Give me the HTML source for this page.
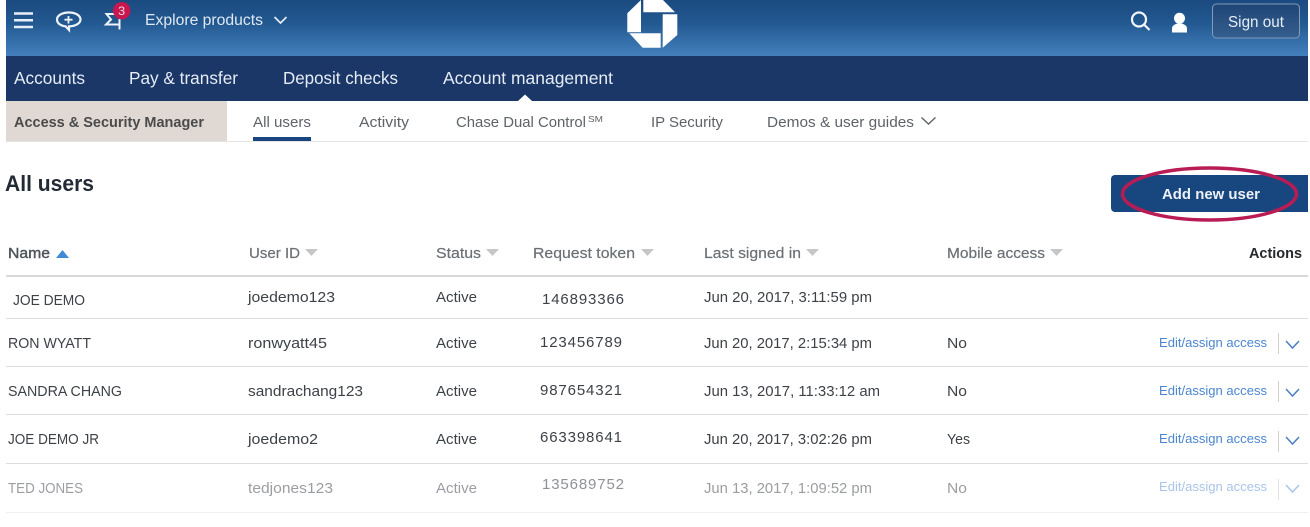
<!DOCTYPE html>
<html><head><meta charset="utf-8"><style>
html,body{margin:0;padding:0;background:#fff;width:1310px;height:527px;overflow:hidden}
svg{display:block;filter:blur(.35px)}
text{font-family:"Liberation Sans",sans-serif;font-size:15.5px;fill:#4a4f55}
.nav{font-size:17.5px;fill:#e6ecf4}
.sub{font-size:15px;fill:#5e6368}
.h{font-size:15px;fill:#6b7075;font-weight:normal;stroke:#6b7075;stroke-width:.2px}
.d{fill:#3d4248;font-size:15px}
.f{fill:#9a9da1;font-size:15px}
.e{fill:#4a85d0;font-size:13px}
.t{fill:#3d4248;font-size:15px}
</style></head><body>
<svg width="1310" height="527" viewBox="0 0 1310 527" xmlns="http://www.w3.org/2000/svg">
<defs><linearGradient id="g" x1="0" y1="0" x2="0" y2="1"><stop offset="0" stop-color="#1b4a80"/><stop offset=".4" stop-color="#225890"/><stop offset="1" stop-color="#4480bd"/></linearGradient>
<linearGradient id="b" x1="0" y1="0" x2="0" y2="1"><stop offset="0" stop-color="#1f4575"/><stop offset="1" stop-color="#355f90"/></linearGradient></defs>
<rect x="6" y="0" width="1302" height="56" fill="url(#g)"/>
<rect x="6" y="56" width="1302" height="45" fill="#1a3768"/>
<rect x="6" y="101" width="221" height="40" fill="#e0d9d3"/>
<rect x="6" y="141" width="1302" height="1" fill="#e4e4e4"/>
<!-- top icons -->
<path d="M14 13.500H33M14 20.300H33M14 27H33" stroke="#e8eef6" stroke-width="2.500" fill="none"/>
<path d="M69 12.500c-7 0-12 3-12 7 0 3.700 3.700 6.400 8.500 6.800l3.500 3.700v-3.600c6.500-.2 11.500-3 11.500-6.900 0-4-5-7-11.500-7z" fill="none" stroke="#eef3f9" stroke-width="2.200"/>
<path d="M64.500 19.700H72.500M68.500 16V23.500" stroke="#eef3f9" stroke-width="1.800"/>
<path d="M119 14H106.500L111 19.500L106 24.500H119.500M119.500 19V29.500" fill="none" stroke="#eef3f9" stroke-width="2"/>
<circle cx="121.700" cy="10.700" r="8.700" fill="#c8174f"/>
<text x="118.200" y="15.200" style="font-size:12px;fill:#f5dbe4" textLength="7" lengthAdjust="spacingAndGlyphs">3</text>
<text x="145" y="25" style="font-size:15.500px;fill:#dfe8f2" textLength="118" lengthAdjust="spacingAndGlyphs">Explore products</text>
<path d="M274.500 17L280.500 23L286.500 17" fill="none" stroke="#e4ecf5" stroke-width="1.700"/>
<!-- logo -->
<g fill="#fff">
<path d="M643.300 0H663L675 12.300H643.300Z"/>
<path d="M627.300 13.300L641 0V32.300H627.300Z"/>
<path d="M662.700 14.300H677.300V35L662.700 47.700Z"/>
<path d="M629.300 33.300H660.700V47.700H642.700Z"/>
</g>
<!-- right icons -->
<circle cx="1139" cy="19.500" r="7" fill="none" stroke="#f2f6fa" stroke-width="2.200"/>
<path d="M1144 24.500L1149.500 30" stroke="#f2f6fa" stroke-width="2.200"/>
<circle cx="1179.500" cy="18.300" r="5.500" fill="#fff"/>
<path d="M1172 32.500V28.500C1172 25 1176 23.500 1179.500 23.500 1183 23.500 1187 25 1187 28.500V32.500Z" fill="#fff"/>
<rect x="1212.500" y="4" width="87" height="34" rx="4" fill="url(#b)" stroke="#7f9cbc" stroke-width="1"/>
<text x="1228" y="27" style="font-size:16px;fill:#e6edf5" textLength="56" lengthAdjust="spacingAndGlyphs">Sign out</text>
<!-- nav -->
<text class="nav" x="14" y="84" textLength="71" lengthAdjust="spacingAndGlyphs">Accounts</text>
<text class="nav" x="129" y="84" textLength="109" lengthAdjust="spacingAndGlyphs">Pay &amp; transfer</text>
<text class="nav" x="283" y="84" textLength="115" lengthAdjust="spacingAndGlyphs">Deposit checks</text>
<text class="nav" x="443" y="84" textLength="170" lengthAdjust="spacingAndGlyphs">Account management</text>
<path d="M518 101L525 94.500L532 101Z" fill="#fff"/>
<!-- subnav -->
<text x="14" y="127" style="font-size:15px;font-weight:bold;fill:#4b4b4c" textLength="190" lengthAdjust="spacingAndGlyphs">Access &amp; Security Manager</text>
<text class="sub" x="253" y="127" textLength="58" lengthAdjust="spacingAndGlyphs">All users</text>
<rect x="253" y="137" width="58" height="4" fill="#1a4680"/>
<text class="sub" x="359" y="127" textLength="50" lengthAdjust="spacingAndGlyphs">Activity</text>
<text class="sub" x="456" y="127" textLength="130" lengthAdjust="spacingAndGlyphs">Chase Dual Control</text>
<text x="588" y="122" style="font-size:8.500px;fill:#5e6368" textLength="15" lengthAdjust="spacingAndGlyphs">SM</text>
<text class="sub" x="651" y="127" textLength="72" lengthAdjust="spacingAndGlyphs">IP Security</text>
<text class="sub" x="767" y="127" textLength="147" lengthAdjust="spacingAndGlyphs">Demos &amp; user guides</text>
<path d="M921.500 117.500L928.500 124L935.500 117.500" fill="none" stroke="#5e6368" stroke-width="1.400"/>
<!-- title -->
<text x="5" y="191" style="font-size:22px;font-weight:bold;fill:#222a35" textLength="89" lengthAdjust="spacingAndGlyphs">All users</text>
<!-- add button -->
<path d="M1115 175H1308V212H1115A4 4 0 0 1 1111 208V179A4 4 0 0 1 1115 175Z" fill="#18477f"/>
<ellipse cx="1209.500" cy="194" rx="87" ry="26" fill="none" stroke="#b91c54" stroke-width="3.500"/>
<text x="1162" y="199" style="font-size:14.500px;font-weight:bold;fill:#eef2f7" textLength="98" lengthAdjust="spacingAndGlyphs">Add new user</text>
<!-- headers -->
<text x="8" y="258" style="font-size:15px;fill:#4f545a;stroke:#4f545a;stroke-width:.4px" textLength="42" lengthAdjust="spacingAndGlyphs">Name</text>
<path d="M56 258L62.500 250L69 258Z" fill="#3f8bd6"/>
<text class="h" x="249" y="258" textLength="51" lengthAdjust="spacingAndGlyphs">User ID</text>
<path d="M305 249H318L311.500 256Z" fill="#c4c6c8"/>
<text class="h" x="436" y="258" textLength="45" lengthAdjust="spacingAndGlyphs">Status</text>
<path d="M486 249H499L492.500 256Z" fill="#c4c6c8"/>
<text class="h" x="533" y="258" textLength="102" lengthAdjust="spacingAndGlyphs">Request token</text>
<path d="M641 249H654L647.500 256Z" fill="#c4c6c8"/>
<text class="h" x="704" y="258" textLength="97" lengthAdjust="spacingAndGlyphs">Last signed in</text>
<path d="M806 249H819L812.500 256Z" fill="#c4c6c8"/>
<text class="h" x="947" y="258" textLength="98" lengthAdjust="spacingAndGlyphs">Mobile access</text>
<path d="M1050 249H1063L1056.500 256Z" fill="#c4c6c8"/>
<text x="1249" y="258" style="font-size:15px;font-weight:bold;fill:#25282c" textLength="53" lengthAdjust="spacingAndGlyphs">Actions</text>
<!-- lines -->
<rect x="6" y="275" width="1302" height="2" fill="#d8d8d8"/>
<rect x="6" y="318" width="1302" height="1" fill="#dcdcdc"/>
<rect x="6" y="366" width="1302" height="1" fill="#dcdcdc"/>
<rect x="6" y="414" width="1302" height="1" fill="#dcdcdc"/>
<rect x="6" y="463" width="1302" height="1" fill="#dcdcdc"/>
<rect x="6" y="512" width="1302" height="1" fill="#efefef"/>
<!-- row 1 -->
<text class="d" x="13" y="305" textLength="72" lengthAdjust="spacingAndGlyphs">JOE DEMO</text>
<text class="d" x="248" y="302" textLength="87" lengthAdjust="spacingAndGlyphs">joedemo123</text>
<text class="d" x="436" y="302" textLength="41" lengthAdjust="spacingAndGlyphs">Active</text>
<text class="t" x="542" y="304" textLength="82" lengthAdjust="spacing">146893366</text>
<text class="d" x="704" y="302" textLength="168" lengthAdjust="spacingAndGlyphs">Jun 20, 2017, 3:11:59 pm</text>
<!-- row 2 -->
<text class="d" x="8" y="348" textLength="83" lengthAdjust="spacingAndGlyphs">RON WYATT</text>
<text class="d" x="248" y="348" textLength="79" lengthAdjust="spacingAndGlyphs">ronwyatt45</text>
<text class="d" x="436" y="348" textLength="41" lengthAdjust="spacingAndGlyphs">Active</text>
<text class="t" x="540" y="347" textLength="82" lengthAdjust="spacing">123456789</text>
<text class="d" x="704" y="348" textLength="168" lengthAdjust="spacingAndGlyphs">Jun 20, 2017, 2:15:34 pm</text>
<text class="d" x="947" y="348" textLength="20" lengthAdjust="spacingAndGlyphs">No</text>
<!-- row 3 -->
<text class="d" x="8" y="396" textLength="114" lengthAdjust="spacingAndGlyphs">SANDRA CHANG</text>
<text class="d" x="248" y="396" textLength="115" lengthAdjust="spacingAndGlyphs">sandrachang123</text>
<text class="d" x="436" y="396" textLength="41" lengthAdjust="spacingAndGlyphs">Active</text>
<text class="t" x="540" y="395" textLength="82" lengthAdjust="spacing">987654321</text>
<text class="d" x="704" y="396" textLength="176" lengthAdjust="spacingAndGlyphs">Jun 13, 2017, 11:33:12 am</text>
<text class="d" x="947" y="396" textLength="20" lengthAdjust="spacingAndGlyphs">No</text>
<!-- row 4 -->
<text class="d" x="8" y="444" textLength="91" lengthAdjust="spacingAndGlyphs">JOE DEMO JR</text>
<text class="d" x="248" y="444" textLength="70" lengthAdjust="spacingAndGlyphs">joedemo2</text>
<text class="d" x="436" y="444" textLength="41" lengthAdjust="spacingAndGlyphs">Active</text>
<text class="t" x="540" y="442" textLength="82" lengthAdjust="spacing">663398641</text>
<text class="d" x="704" y="444" textLength="168" lengthAdjust="spacingAndGlyphs">Jun 20, 2017, 3:02:26 pm</text>
<text class="d" x="947" y="444" textLength="23" lengthAdjust="spacingAndGlyphs">Yes</text>
<!-- row 5 -->
<text class="f" x="8" y="493" textLength="75" lengthAdjust="spacingAndGlyphs">TED JONES</text>
<text class="f" x="248" y="493" textLength="85" lengthAdjust="spacingAndGlyphs">tedjones123</text>
<text class="f" x="436" y="493" textLength="41" lengthAdjust="spacingAndGlyphs">Active</text>
<text class="t" style="fill:#8f9297" x="542" y="489" textLength="82" lengthAdjust="spacing">135689752</text>
<text class="f" x="704" y="493" textLength="168" lengthAdjust="spacingAndGlyphs">Jun 13, 2017, 1:09:52 pm</text>
<text class="f" x="947" y="493" textLength="20" lengthAdjust="spacingAndGlyphs">No</text>
<!-- actions -->
<text class="e" x="1159" y="347" textLength="108" lengthAdjust="spacingAndGlyphs">Edit/assign access</text>
<rect x="1278" y="333" width="1" height="21" fill="#d0d0d0"/>
<path d="M1286 341L1292.500 348L1299 341" fill="none" stroke="#4a7fc4" stroke-width="1.500"/>
<text class="e" x="1159" y="395" textLength="108" lengthAdjust="spacingAndGlyphs">Edit/assign access</text>
<rect x="1278" y="381" width="1" height="21" fill="#d0d0d0"/>
<path d="M1286 389L1292.500 396L1299 389" fill="none" stroke="#4a7fc4" stroke-width="1.500"/>
<text class="e" x="1159" y="443" textLength="108" lengthAdjust="spacingAndGlyphs">Edit/assign access</text>
<rect x="1278" y="431" width="1" height="21" fill="#d0d0d0"/>
<path d="M1286 437L1292.500 444L1299 437" fill="none" stroke="#4a7fc4" stroke-width="1.500"/>
<text class="e" x="1159" y="491" style="fill:#a9c5ea" textLength="108" lengthAdjust="spacingAndGlyphs">Edit/assign access</text>
<rect x="1278" y="479" width="1" height="21" fill="#e2e2e2"/>
<path d="M1286 485L1292.500 492L1299 485" fill="none" stroke="#a9c5ea" stroke-width="1.500"/>
</svg>
</body></html>
